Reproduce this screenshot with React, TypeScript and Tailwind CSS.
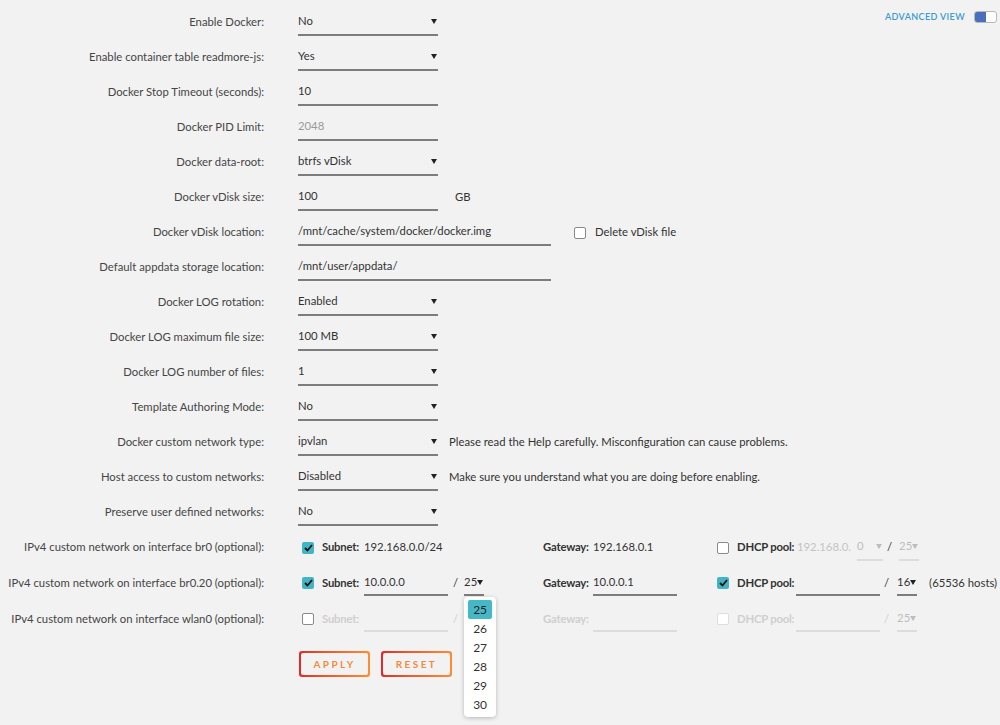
import React from 'react'

const font = { fontFamily: 'Lato, "Noto Sans", sans-serif' }

function Arrow({ muted = false }: { muted?: boolean }) {
  return (
    <svg width="6" height="5" viewBox="0 0 6 5" className="shrink-0">
      <path d="M0 0 L6 0 L3 5 Z" fill={muted ? '#bdbdbd' : '#222'} />
    </svg>
  )
}

function Select({ value, w = 'w-[140px]', muted = false, dim = false }: { value: string; w?: string; muted?: boolean; dim?: boolean }) {
  return (
    <div
      className={`${w} h-[26px] flex items-center justify-between pr-[1px] border-b-2 ${
        dim ? 'border-[#dcdcdc] text-[#bdbdbd]' : 'border-[#7d7d7d] text-[#333]'
      }`}
    >
      <span>{value}</span>
      <Arrow muted={muted} />
    </div>
  )
}

function Input({ value, w = 'w-[140px]', placeholder = false, dim = false }: { value?: string; w?: string; placeholder?: boolean; dim?: boolean }) {
  return (
    <div
      className={`${w} h-[26px] flex items-center border-b-2 ${
        dim ? 'border-[#dcdcdc]' : 'border-[#7d7d7d]'
      } ${placeholder ? 'text-[#9a9a9a]' : 'text-[#333]'}`}
    >
      {value}
    </div>
  )
}

function Check({ on = false, dim = false }: { on?: boolean; dim?: boolean }) {
  if (on)
    return (
      <div className="w-[12px] h-[12px] rounded-[2px] bg-[#41b5c4] flex items-center justify-center shrink-0">
        <svg width="9" height="8" viewBox="0 0 9 8">
          <path d="M1 4 L3.5 6.5 L8 1" stroke="#111" strokeWidth="1.8" fill="none" />
        </svg>
      </div>
    )
  return (
    <div
      className={`w-[12px] h-[12px] rounded-[2px] border bg-white shrink-0 ${
        dim ? 'border-[#dedede]' : 'border-[#8a8a8a]'
      }`}
    />
  )
}

function Row({ label, tall = false, children }: { label: string; tall?: boolean; children?: React.ReactNode }) {
  return (
    <div className={`flex items-center ${tall ? 'h-[36px]' : 'h-[35px]'}`}>
      <div className="w-[264px] flex justify-end text-[#454545] shrink-0">
        <span className="shrink-0">{label}</span>
      </div>
      <div className="ml-[34px] flex items-center">{children}</div>
    </div>
  )
}

function Note({ children }: { children: React.ReactNode }) {
  return <span className="ml-[11px] text-[#333]">{children}</span>
}

// bold field labels inside the IPv4 rows, fixed widths keep the inputs lined up
function Lbl({ text, w, dim = false }: { text: string; w: string; dim?: boolean }) {
  return <b className={`${w} shrink-0 tracking-[-0.2px] ${dim ? 'text-[#cfcfcf]' : 'text-[#333]'}`}>{text}</b>
}

export default function App() {
  return (
    <div className="relative min-h-[725px] bg-[#f2f2f2] text-[11.3px] whitespace-nowrap" style={font}>
      <div className="absolute top-[10px] right-[3px] flex items-center gap-[9px]">
        <span className="text-[9px] tracking-[0.4px] text-[#3a9bd1] font-semibold">ADVANCED VIEW</span>
        <div className="w-[23px] h-[12px] rounded-[3px] border border-[#b8b8b8] bg-white flex overflow-hidden">
          <div className="w-[11px] bg-[#4a6fbd]" />
        </div>
      </div>

      <div className="pt-[5px]">
        <Row label="Enable Docker:"><Select value="No" /></Row>
        <Row label="Enable container table readmore-js:"><Select value="Yes" /></Row>
        <Row label="Docker Stop Timeout (seconds):"><Input value="10" /></Row>
        <Row label="Docker PID Limit:"><Input value="2048" placeholder /></Row>
        <Row label="Docker data-root:"><Select value="btrfs vDisk" /></Row>
        <Row label="Docker vDisk size:">
          <Input value="100" />
          <span className="ml-[17px] text-[#333]">GB</span>
        </Row>
        <Row label="Docker vDisk location:">
          <Input value="/mnt/cache/system/docker/docker.img" w="w-[253px]" />
          <div className="ml-[23px] flex items-center gap-[9px] text-[#333]">
            <Check />
            <span>Delete vDisk file</span>
          </div>
        </Row>
        <Row label="Default appdata storage location:"><Input value="/mnt/user/appdata/" w="w-[253px]" /></Row>
        <Row label="Docker LOG rotation:"><Select value="Enabled" /></Row>
        <Row label="Docker LOG maximum file size:"><Select value="100 MB" /></Row>
        <Row label="Docker LOG number of files:"><Select value="1" /></Row>
        <Row label="Template Authoring Mode:"><Select value="No" /></Row>
        <Row label="Docker custom network type:">
          <Select value="ipvlan" />
          <Note>Please read the Help carefully. Misconfiguration can cause problems.</Note>
        </Row>
        <Row label="Host access to custom networks:">
          <Select value="Disabled" />
          <Note>Make sure you understand what you are doing before enabling.</Note>
        </Row>
        <Row label="Preserve user defined networks:"><Select value="No" /></Row>

        <Row label="IPv4 custom network on interface br0 (optional):">
          <div className="w-[245px] flex items-center">
            <div className="ml-[4px] mr-[8px]"><Check on /></div>
            <Lbl text="Subnet:" w="w-[42px]" />
            <span className="text-[#333]">192.168.0.0/24</span>
          </div>
          <div className="w-[174px] flex items-center">
            <Lbl text="Gateway:" w="w-[50px]" />
            <span className="text-[#333]">192.168.0.1</span>
          </div>
          <div className="flex items-center">
            <div className="mr-[8px]"><Check /></div>
            <Lbl text="DHCP pool:" w="w-[60px]" />
            <span className="w-[60px] text-[#c4c4c4]">192.168.0.</span>
            <Select value="0" w="w-[26px]" muted dim />
            <span className="ml-[4px] text-[#333]">/</span>
            <div className="ml-[7px]"><Select value="25" w="w-[20px]" muted dim /></div>
          </div>
        </Row>

        <Row label="IPv4 custom network on interface br0.20 (optional):" tall>
          <div className="w-[245px] flex items-center">
            <div className="ml-[4px] mr-[8px]"><Check on /></div>
            <Lbl text="Subnet:" w="w-[42px]" />
            <Input value="10.0.0.0" w="w-[84px]" />
            <span className="ml-[5px] text-[#333]">/</span>
            <div className="relative ml-[6px]">
              <Select value="25" w="w-[20px]" />
              <div className="absolute left-[0px] top-[27px] w-[32px] rounded-[4px] bg-white shadow-[0_1px_4px_rgba(0,0,0,0.25)] py-[3px] flex flex-col items-center z-10">
                <div className="w-[24px] h-[19px] rounded-[2px] bg-[#45b8c7] flex items-center justify-center text-[#222] text-[12px]">25</div>
                {['26', '27', '28', '29', '30'].map((n) => (
                  <div key={n} className="w-[24px] h-[19px] flex items-center justify-center text-[#333] text-[12px]">{n}</div>
                ))}
              </div>
            </div>
          </div>
          <div className="w-[174px] flex items-center">
            <Lbl text="Gateway:" w="w-[50px]" />
            <Input value="10.0.0.1" w="w-[84px]" />
          </div>
          <div className="flex items-center">
            <div className="mr-[8px]"><Check on /></div>
            <Lbl text="DHCP pool:" w="w-[59px]" />
            <Input w="w-[84px]" />
            <span className="ml-[4px] text-[#333]">/</span>
            <div className="ml-[8px]"><Select value="16" w="w-[20px]" /></div>
            <span className="ml-[12px] text-[#333]">(65536 hosts)</span>
          </div>
        </Row>

        <Row label="IPv4 custom network on interface wlan0 (optional):" tall>
          <div className="w-[245px] flex items-center">
            <div className="ml-[4px] mr-[8px]"><Check /></div>
            <Lbl text="Subnet:" w="w-[42px]" dim />
            <Input w="w-[84px]" dim />
            <span className="ml-[5px] text-[#cfcfcf]">/</span>
          </div>
          <div className="w-[174px] flex items-center">
            <Lbl text="Gateway:" w="w-[50px]" dim />
            <Input w="w-[84px]" dim />
          </div>
          <div className="flex items-center">
            <div className="mr-[8px]"><Check dim /></div>
            <Lbl text="DHCP pool:" w="w-[59px]" dim />
            <Input w="w-[84px]" dim />
            <span className="ml-[4px] text-[#cfcfcf]">/</span>
            <div className="ml-[8px] text-[#9a9a9a]"><Select value="25" w="w-[20px]" muted dim /></div>
          </div>
        </Row>
      </div>

      <div className="ml-[299px] mt-[14px] flex gap-[11px]">
        {['APPLY', 'RESET'].map((t) => (
          <div key={t} className="w-[71px] h-[26px] rounded-[3px] p-[2px] bg-gradient-to-r from-[#e22828] to-[#ff8c2f]">
            <div className="w-full h-full rounded-[2px] bg-[#f2f2f2] flex items-center justify-center text-[10px] font-bold tracking-[2.4px] text-[#f58a3c]">
              {t}
            </div>
          </div>
        ))}
      </div>
    </div>
  )
}
